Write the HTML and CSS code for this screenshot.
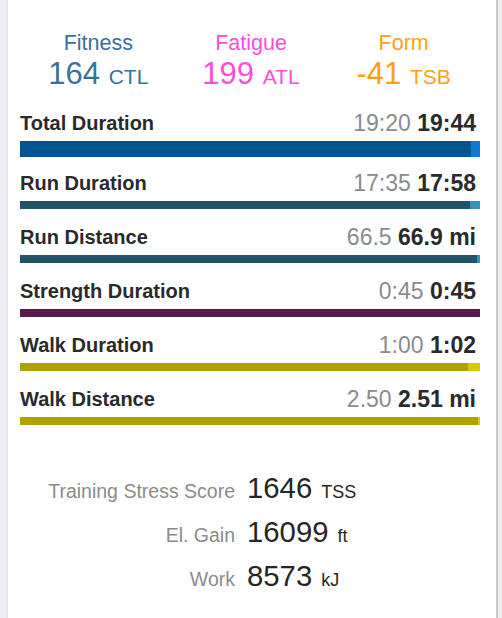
FILE: index.html
```html
<!DOCTYPE html>
<html lang="en">
<head>
  <meta charset="UTF-8">
  <title>Training Summary</title>
  <link rel="stylesheet" href="styles.css">
</head>
<body>
  <div class="card">
    <div class="load">
      <div class="load-col fitness">
        <div class="load-label">Fitness</div>
        <div class="load-value">164 <span class="load-unit">CTL</span></div>
      </div>
      <div class="load-col fatigue">
        <div class="load-label">Fatigue</div>
        <div class="load-value">199 <span class="load-unit">ATL</span></div>
      </div>
      <div class="load-col form">
        <div class="load-label">Form</div>
        <div class="load-value">-41 <span class="load-unit">TSB</span></div>
      </div>
    </div>

    <div class="totals">
      <div class="total total-main">
        <div class="total-line">
          <span class="total-name">Total Duration</span>
          <span class="total-nums"><span class="planned">19:20</span> <b>19:44</b></span>
        </div>
        <div class="bar bar-blue"><div class="bar-fill" style="width: 98%"></div></div>
      </div>
      <div class="total">
        <div class="total-line">
          <span class="total-name">Run Duration</span>
          <span class="total-nums"><span class="planned">17:35</span> <b>17:58</b></span>
        </div>
        <div class="bar bar-teal"><div class="bar-fill" style="width: 97.8%"></div></div>
      </div>
      <div class="total">
        <div class="total-line">
          <span class="total-name">Run Distance</span>
          <span class="total-nums"><span class="planned">66.5</span> <b>66.9 mi</b></span>
        </div>
        <div class="bar bar-teal"><div class="bar-fill" style="width: 99.4%"></div></div>
      </div>
      <div class="total">
        <div class="total-line">
          <span class="total-name">Strength Duration</span>
          <span class="total-nums"><span class="planned">0:45</span> <b>0:45</b></span>
        </div>
        <div class="bar bar-purple"><div class="bar-fill" style="width: 100%"></div></div>
      </div>
      <div class="total">
        <div class="total-line">
          <span class="total-name">Walk Duration</span>
          <span class="total-nums"><span class="planned">1:00</span> <b>1:02</b></span>
        </div>
        <div class="bar bar-olive"><div class="bar-fill" style="width: 97.4%"></div></div>
      </div>
      <div class="total">
        <div class="total-line">
          <span class="total-name">Walk Distance</span>
          <span class="total-nums"><span class="planned">2.50</span> <b>2.51 mi</b></span>
        </div>
        <div class="bar bar-olive"><div class="bar-fill" style="width: 99.6%"></div></div>
      </div>
    </div>

    <div class="stats">
      <span class="stat-name">Training Stress Score</span>
      <span class="stat-value">1646 <small>TSS</small></span>
      <span class="stat-name">El. Gain</span>
      <span class="stat-value">16099 <small>ft</small></span>
      <span class="stat-name">Work</span>
      <span class="stat-value">8573 <small>kJ</small></span>
    </div>
  </div>
</body>
</html>
```

FILE: styles.css
```css
* { box-sizing: border-box; margin: 0; padding: 0; }
body {
  font-family: 'Liberation Sans', Arial, Helvetica, sans-serif;
  background: #efefef;
  min-height: 100vh;
}
.card {
  width: 492px;
  min-height: 618px;
  margin-left: 6px;
  background: #fff;
  border-left: 2px solid #e3e6f4;
  border-right: 2px solid #c9c9c9;
  padding: 30px 16px 0 12px;
}

/* fitness / fatigue / form */
.load {
  display: grid;
  grid-template-columns: repeat(3, 1fr);
  padding-left: 2px;
  text-align: center;
}
.load-label { font-size: 21.5px; line-height: 27px; }
.load-value { font-size: 31px; line-height: 34px; }
.load-unit { font-size: 21px; }
.fitness { color: #3b6f9c; }
.fatigue { color: #fd4fd6; }
.form { color: #ffa012; }

/* totals with bars */
.totals { margin-top: 16px; }
.total { margin-bottom: 15px; }
.total-main { margin-bottom: 13px; }
.total-line {
  display: flex; justify-content: space-between; align-items: center;
  height: 26px;
  color: #2a2a2a;
}
.total-name { font-size: 20px; font-weight: 700; }
.total-nums { font-size: 23px; padding-right: 4px; }
.total-nums .planned { color: #8b8b8b; }
.bar { margin-top: 5px; height: 8px; }
.total-main .bar { height: 16px; }
.bar-fill { height: 100%; }
.bar-blue { background: #0a7bd1; }
.bar-blue .bar-fill { background: #00558f; }
.bar-teal { background: #3a93b6; }
.bar-teal .bar-fill { background: #1f5366; }
.bar-purple { background: #571a51; }
.bar-purple .bar-fill { background: #571a51; }
.bar-olive { background: #d9c900; }
.bar-olive .bar-fill { background: #aea200; }

/* summary stats */
.stats {
  margin-top: 41px;
  display: grid;
  grid-template-columns: 215px auto;
  column-gap: 12px;
  align-items: baseline;
  line-height: 44px;
}
.stat-name { font-size: 19.5px; line-height: 1; color: #8b8b8b; text-align: right; }
.stat-value { font-size: 29.3px; color: #262626; }
.stat-value small { font-size: 18px; line-height: 1; margin-left: 1px; }
```
